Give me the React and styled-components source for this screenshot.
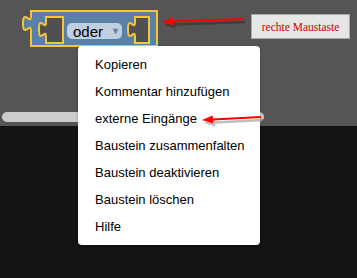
import React from 'react';
import styled, { createGlobalStyle } from 'styled-components';

const GlobalStyle = createGlobalStyle`
  html, body {
    margin: 0;
    padding: 0;
    background: #141414;
    overflow: hidden;
  }
`;

const Page = styled.div`
  position: relative;
  width: 357px;
  height: 278px;
  display: flex;
  flex-direction: column;
  font-family: 'Liberation Sans', Arial, sans-serif;
`;

const Workspace = styled.div`
  position: relative;
  height: 126px;
  flex: none;
  background: #555555;
`;

const Toolbox = styled.div`
  flex: 1;
  background: #141414;
`;

const BlockWrap = styled.div`
  position: absolute;
  left: 20px;
  top: 8px;
  width: 142px;
  height: 42px;
`;

const BlockShape = styled.svg`
  position: absolute;
  inset: 0;
`;

const Dropdown = styled.div`
  position: absolute;
  left: 47px;
  top: 15px;
  width: 55px;
  height: 16px;
  border-radius: 5px;
  background: #bfcfdf;
  display: flex;
  align-items: center;
  padding-left: 6px;
  box-sizing: border-box;
  gap: 8px;
  font-size: 15px;
  color: #000;
  line-height: 1;
`;

const Caret = styled.span`
  font-size: 9px;
  color: #5b80a5;
  margin-top: 1px;
`;

const Note = styled.div`
  position: absolute;
  left: 251px;
  top: 14px;
  width: 99px;
  height: 25px;
  box-sizing: border-box;
  border: 1px solid #a8a8a8;
  background: #e6e6e6;
  display: flex;
  align-items: center;
  justify-content: center;
  font-family: 'Liberation Serif', 'Times New Roman', serif;
  font-size: 11.5px;
  color: #cc0000;
`;

const Arrow = styled.svg`
  position: absolute;
  left: 0;
  top: 0;
  overflow: visible;
  pointer-events: none;
  z-index: ${(p) => p.$z || 1};
`;

const Scrollbar = styled.div`
  position: absolute;
  left: 2px;
  bottom: 4px;
  width: 262px;
  height: 10px;
  border-radius: 5px;
  background: #cccccc;
`;

const Menu = styled.ul`
  position: absolute;
  left: 78px;
  top: 46px;
  width: 182px;
  height: 199px;
  margin: 0;
  padding: 5px 0;
  box-sizing: border-box;
  list-style: none;
  background: #ffffff;
  border-radius: 4px;
  box-shadow: 0 1px 3px rgba(0, 0, 0, 0.3);
  z-index: 2;
`;

const Item = styled.li`
  height: 27px;
  display: flex;
  align-items: center;
  padding-left: 17px;
  font-size: 13px;
  color: #000;
`;

const items = [
  'Kopieren',
  'Kommentar hinzufügen',
  'externe Eingänge',
  'Baustein zusammenfalten',
  'Baustein deaktivieren',
  'Baustein löschen',
  'Hilfe',
];

const RedArrow = ({ x1, y1, x2, y2, z }) => {
  const a = Math.atan2(y2 - y1, x2 - x1);
  const len = 11;
  const w = 4;
  const bx = x2 - Math.cos(a) * len;
  const by = y2 - Math.sin(a) * len;
  const px = -Math.sin(a) * w;
  const py = Math.cos(a) * w;
  const head = `${x2},${y2} ${bx + px},${by + py} ${bx - px},${by - py}`;
  return (
    <Arrow $z={z} width="357" height="278">
      <g transform="translate(2,3)" opacity="0.25">
        <line x1={x1} y1={y1} x2={bx} y2={by} stroke="#000" strokeWidth="2.5" />
        <polygon points={head} fill="#000" />
      </g>
      <line x1={x1} y1={y1} x2={bx} y2={by} stroke="#ff0000" strokeWidth="2" />
      <polygon points={head} fill="#ff0000" />
    </Arrow>
  );
};

const Block = () => (
  <BlockWrap>
    <BlockShape width="142" height="42" viewBox="20 8 142 42">
      <path
        d="M31,11 H157 V46 H31 V31 c0,-10 -8,8 -8,-7.5 s8,2.5 8,-7.5 V11 z"
        fill="#5b80a5"
        stroke="#f6c33c"
        strokeWidth="2"
      />
      <path
        d="M63,17 H46 V22 c0,10 -7,-8 -7,7.5 s7,-2.5 7,7.5 V43 H63 Z"
        fill="#505050"
        stroke="#f6c33c"
        strokeWidth="2"
      />
      <path
        d="M149,17 H135 V22 c0,10 -7,-8 -7,7.5 s7,-2.5 7,7.5 V43 H149 Z"
        fill="#505050"
        stroke="#f6c33c"
        strokeWidth="2"
      />
    </BlockShape>
    <Dropdown>
      oder
      <Caret>▼</Caret>
    </Dropdown>
  </BlockWrap>
);

export default function App() {
  return (
    <>
      <GlobalStyle />
      <Page>
        <Workspace>
          <Block />
          <Note>rechte Maustaste</Note>
          <Scrollbar />
        </Workspace>
        <Toolbox />
        <RedArrow x1={243} y1={19} x2={162} y2={22} z={1} />
        <Menu>
          {items.map((t) => (
            <Item key={t}>{t}</Item>
          ))}
        </Menu>
        <RedArrow x1={261} y1={117} x2={202} y2={120} z={3} />
      </Page>
    </>
  );
}
